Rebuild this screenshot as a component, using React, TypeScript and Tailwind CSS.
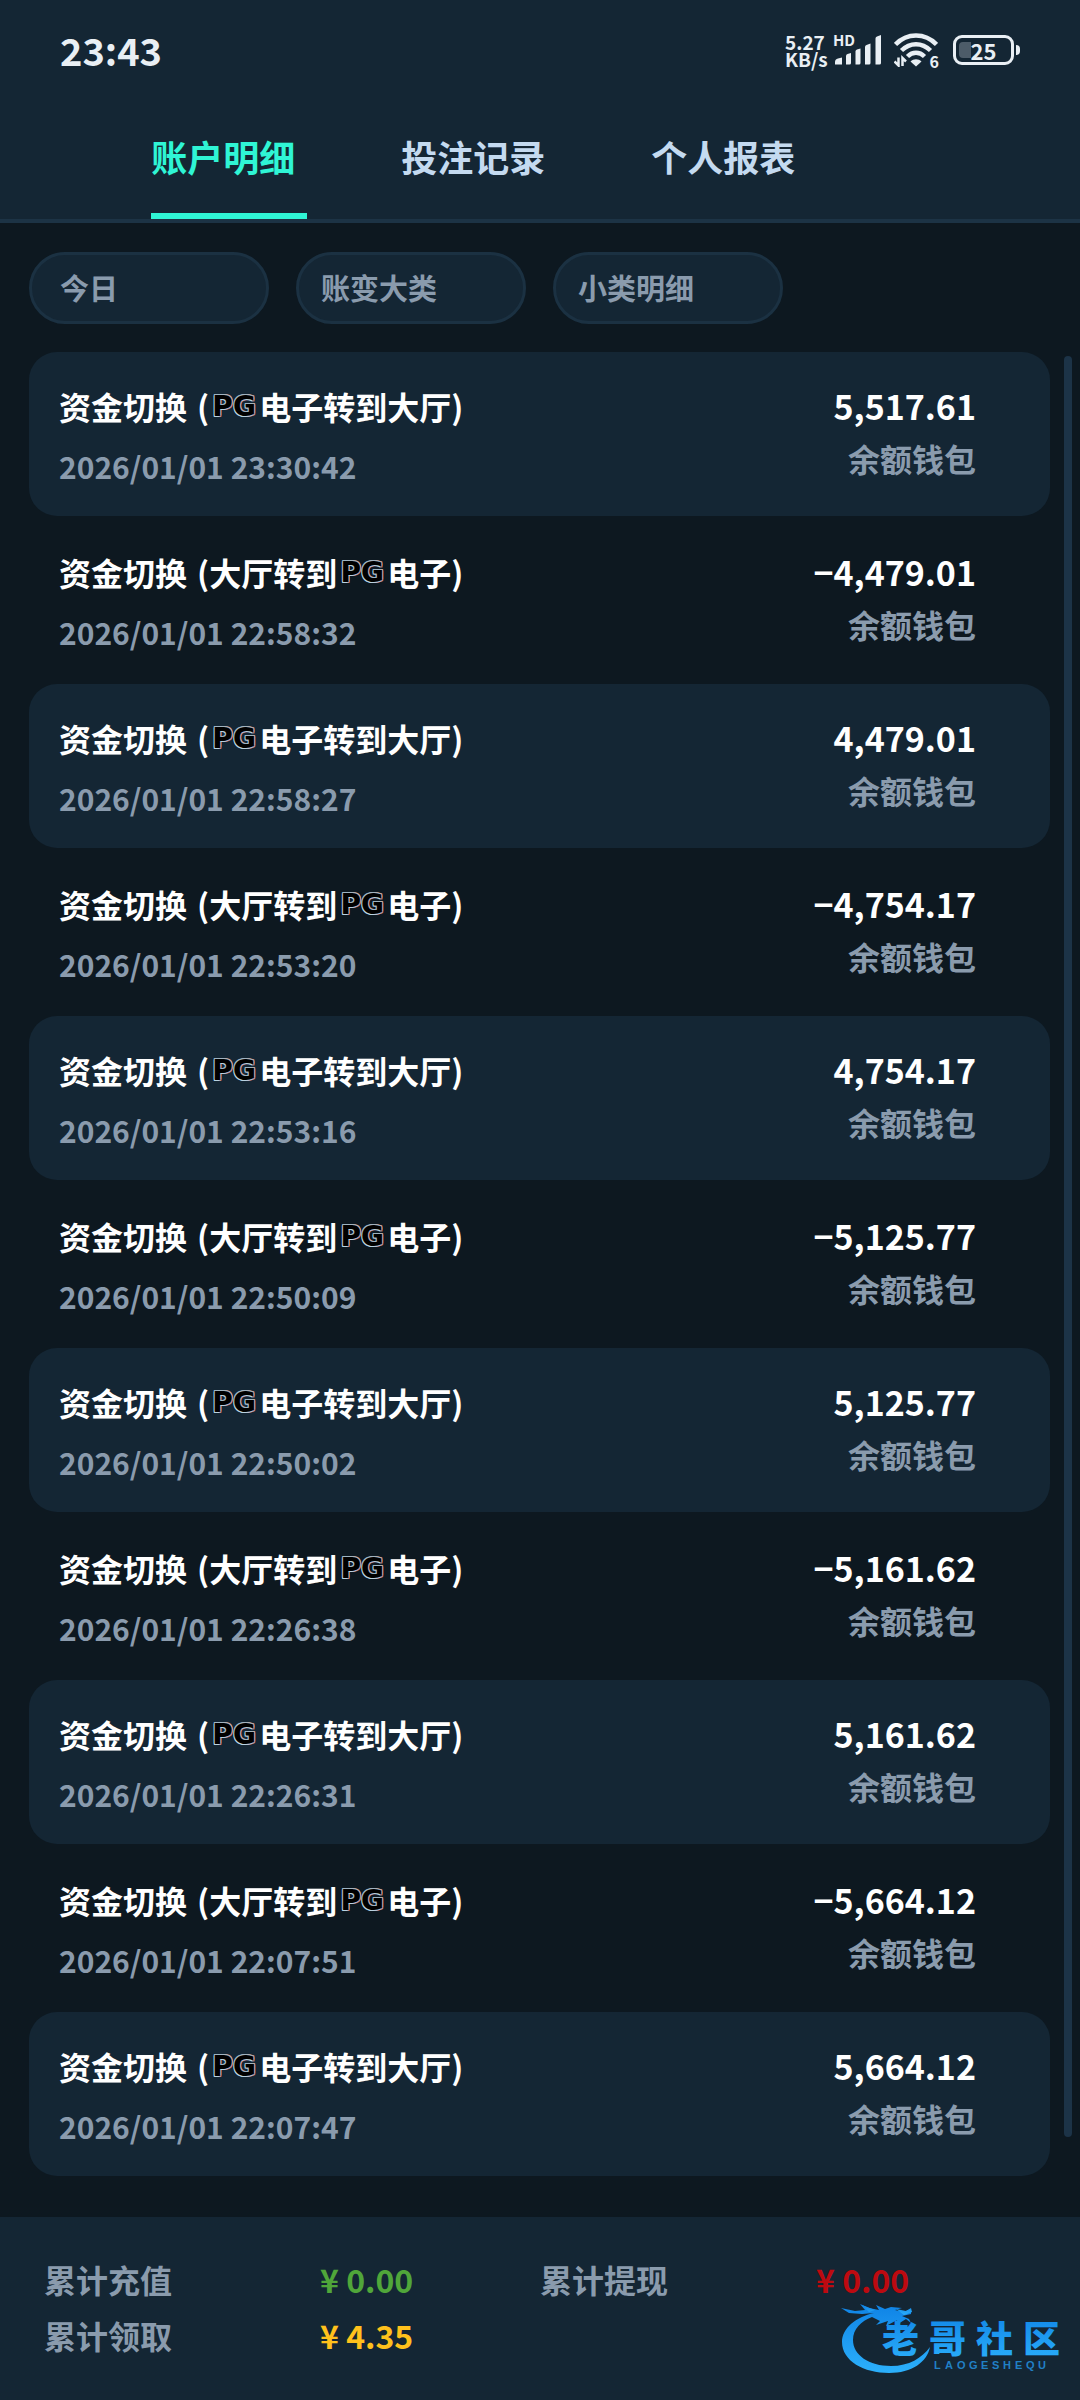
import React, { useState } from 'react';
import clsx from 'clsx';

interface Transfer {
  direction: 'toLobby' | 'toGame';
  time: string;
  amount: string;
}

const transfers: Transfer[] = [
  { direction: 'toLobby', time: '2026/01/01 23:30:42', amount: '5,517.61' },
  { direction: 'toGame', time: '2026/01/01 22:58:32', amount: '−4,479.01' },
  { direction: 'toLobby', time: '2026/01/01 22:58:27', amount: '4,479.01' },
  { direction: 'toGame', time: '2026/01/01 22:53:20', amount: '−4,754.17' },
  { direction: 'toLobby', time: '2026/01/01 22:53:16', amount: '4,754.17' },
  { direction: 'toGame', time: '2026/01/01 22:50:09', amount: '−5,125.77' },
  { direction: 'toLobby', time: '2026/01/01 22:50:02', amount: '5,125.77' },
  { direction: 'toGame', time: '2026/01/01 22:26:38', amount: '−5,161.62' },
  { direction: 'toLobby', time: '2026/01/01 22:26:31', amount: '5,161.62' },
  { direction: 'toGame', time: '2026/01/01 22:07:51', amount: '−5,664.12' },
  { direction: 'toLobby', time: '2026/01/01 22:07:47', amount: '5,664.12' },
];

const tabs = ['账户明细', '投注记录', '个人报表'];

const filters = [
  { id: 'date', name: '日期', value: '今日', className: 'w-[240px] pl-7' },
  { id: 'category', name: '账变类型', value: '账变大类', className: 'w-[230px] pl-[22px]' },
  { id: 'detail', name: '明细类型', value: '小类明细', className: 'w-[230px] pl-[22px]' },
];

const totals = [
  { label: '累计充值', value: '¥ 0.00', color: 'text-[#50a63a]' },
  { label: '累计提现', value: '¥ 0.00', color: 'text-[#bd0a10]' },
  { label: '累计领取', value: '¥ 4.35', color: 'text-[#ffc11c]' },
];

function SignalIcon() {
  return (
    <svg width="47" height="30" viewBox="0 0 47 30" fill="currentColor">
      <path d="M0 29.500V27Q0 24 3 23.500L7 22.500V29.500Z" />
      <path d="M11 29.500V21Q11 19.500 12.500 19L16 18V28Q16 29.500 14.500 29.500Z" />
      <path d="M20.500 29.500V16.500Q20.500 15 22 14.500L25.500 13.500V28Q25.500 29.500 24 29.500Z" />
      <path d="M30 29.500V12Q30 10.500 31.500 10L35.500 8.500V28Q35.500 29.500 34 29.500Z" />
      <path d="M40.500 29.500V3.500Q40.500 2 42 1.500L46 0V28Q46 29.500 44.500 29.500Z" />
    </svg>
  );
}

function WifiIcon() {
  return (
    <svg width="44" height="34" viewBox="0 0 44 34" fill="none" stroke="currentColor" strokeWidth="4.500">
      <path d="M1.500 11.500C13 -0.500 31 -0.500 42.500 11.500" />
      <path d="M7.500 17.500C16 9 28 9 36.500 17.500" />
      <path d="M13.500 23.500C18.500 18.500 25.500 18.500 30.500 23.500" />
      <path d="M16.500 28.500C19.500 25.500 24.500 25.500 27.500 28.500L22 33.500Z" fill="currentColor" stroke="none" />
      <path d="M4.500 24.500V32.500L0.500 28.500M8.500 33V25L12 28.500" strokeWidth="2.500" />
    </svg>
  );
}

function StatusBar() {
  return (
    <div className="flex h-[104px] items-center justify-between px-[60px] pb-1 text-[#e9eff4]">
      <time className="text-[38px] leading-10 font-bold">23:43</time>
      <div className="flex items-center">
        <div className="w-[50px] text-[19px] leading-[17px] font-bold">
          <div>5.27</div>
          <div>KB/s</div>
        </div>
        <div className="relative mr-3">
          <SignalIcon />
          <span className="absolute -top-1 -left-0.5 text-[15px] leading-[17px] font-bold">HD</span>
        </div>
        <div className="relative mr-[15px]">
          <WifiIcon />
          <span className="absolute -right-px -bottom-0.5 bg-[#142634] text-[16px] leading-4 font-bold">6</span>
        </div>
        <div className="relative flex h-[30px] w-[61px] items-center justify-center rounded-[9px] border-[3px] border-current">
          <span className="absolute left-[3px] h-4 w-3 rounded-l-[4px] bg-[#4d5c69]" />
          <span className="relative text-[22px] leading-[22px] font-bold">25</span>
        </div>
        <span className="ml-0.5 h-[10px] w-1 rounded-r-full bg-current" />
      </div>
    </div>
  );
}

function GameBadge() {
  return (
    <span className="mx-0.5 w-[46px] pt-0.5 text-center font-['DejaVu_Sans',sans-serif] text-[28px] leading-[38px] font-bold text-black [text-shadow:-1px_-1px_#9fb4c2,-1px_1px_#b9d3e0,1px_-1px_#c9a9a6,0_-1px_#b7b3b8,-1px_0_#a8bccb,0_1px_#a99ac4,1px_1px_#d98b86,1px_0_#bfa2c9]">
      PG
    </span>
  );
}

function TransferRow({ transfer, highlighted }: { transfer: Transfer; highlighted: boolean }) {
  return (
    <li
      className={clsx(
        'flex h-[164px] justify-between rounded-[28px] pt-[34px] pr-[74px] pl-[30px] leading-10',
        highlighted && 'bg-[#142634]'
      )}
    >
      <div className="flex flex-col gap-5">
        <div className="flex text-[32px] font-bold text-white">
          <span>资金切换</span>
          <span className="ml-2.5">(</span>
          {transfer.direction === 'toLobby' ? (
            <>
              <GameBadge />
              <span>电子转到大厅</span>
            </>
          ) : (
            <>
              <span>大厅转到</span>
              <GameBadge />
              <span>电子</span>
            </>
          )}
          <span>)</span>
        </div>
        <time className="text-[30px] font-bold text-[#8a9bad]">{transfer.time}</time>
      </div>
      <div className="flex flex-col gap-3 text-right font-bold">
        <span className="text-[34px] text-white">{transfer.amount}</span>
        <span className="text-[32px] text-[#8a9bad]">余额钱包</span>
      </div>
    </li>
  );
}

function CommunityLogo() {
  return (
    <div className="absolute right-[17px] bottom-[26px] h-[70px] w-[223px]">
      <svg width="223" height="70" viewBox="0 0 223 70">
        <defs>
          <linearGradient id="dragon" x1="0" y1="0" x2="0" y2="1">
            <stop offset="0" stopColor="#0f83e6" />
            <stop offset="1" stopColor="#2cb0fb" />
          </linearGradient>
        </defs>
        <g fill="url(#dragon)">
          <path d="M34 9C16 13 2 24 2 38C2 57 24 69 49 69C72 69 87 58 90 43C82 54 69 62 51 62C29 62 13 51 13 36C13 25 21 17 32 13L40 17L36 21L48 17L46 22L57 16L58 20L66 15L71 19L69 15L62 12L71 10V5L63 8L55 6L62 4L51 3L45 5L36 1L39 6L29 4L20 0L25 6L15 7L1 4L9 9L22 10Z" />
          <path d="M56 5L66 7L71 4L72 8L64 11ZM22 1L35 6L29 8Z" />
        </g>
        <g className="font-['Noto_Sans_CJK_SC',sans-serif] text-[37px] font-black" fill="url(#dragon)">
          <text x="42" y="49">老</text>
          <text x="89" y="49">哥</text>
          <text x="136" y="49">社</text>
          <text x="183" y="49">区</text>
        </g>
        <text x="94 105 117 129 141 152 163 175 186 198" y="65" className="font-['Liberation_Sans',sans-serif] text-[11px]" fill="#2180c6">
          LAOGESHEQU
        </text>
      </svg>
    </div>
  );
}

export default function App() {
  const [activeTab, setActiveTab] = useState(tabs[0]);

  return (
    <div className="flex min-h-screen flex-col bg-[#0d1820] font-['Noto_Sans_CJK_SC',sans-serif] font-bold">
      <header className="border-b-4 border-[#1c3345] bg-[#142634]">
        <StatusBar />
        <nav className="flex gap-[94px] px-[14%]">
          {tabs.map((tab) => (
            <button
              key={tab}
              onClick={() => setActiveTab(tab)}
              className={clsx(
                'w-[156px] border-b-[6px] pt-8 pb-[37px] text-left text-[36px] leading-10 font-bold',
                tab === activeTab ? 'border-[#2ff5d5] text-[#2ff5d5]' : 'border-transparent text-[#c4daf0]'
              )}
            >
              {tab}
            </button>
          ))}
        </nav>
      </header>

      <div className="flex gap-[27px] px-[29px] pt-[29px] pb-7">
        {filters.map((filter) => (
          <select
            key={filter.id}
            aria-label={filter.name}
            className={clsx(
              'h-[72px] appearance-none rounded-full border-[3px] border-[#1b3142] bg-[#142634] text-[29px] font-bold text-[#8a9bad]',
              filter.className
            )}
          >
            <option>{filter.value}</option>
          </select>
        ))}
      </div>

      <main className="relative flex-1">
        <ul className="flex flex-col gap-0.5 pr-[30px] pl-[29px]">
          {transfers.map((transfer, index) => (
            <TransferRow key={transfer.time} transfer={transfer} highlighted={index % 2 === 0} />
          ))}
        </ul>
        <div className="absolute top-1 right-2 bottom-20 w-2 rounded-full bg-[#1c3347]" />
      </main>

      <footer className="relative grid h-[183px] grid-cols-2 content-start gap-y-4 bg-[#142634] px-11 pt-[42px] text-[32px] leading-10">
        {totals.map((total) => (
          <div key={total.label} className="flex">
            <span className="w-[276px] text-[#8a9bad]">{total.label}</span>
            <span className={total.color}>{total.value}</span>
          </div>
        ))}
        <CommunityLogo />
      </footer>
    </div>
  );
}
